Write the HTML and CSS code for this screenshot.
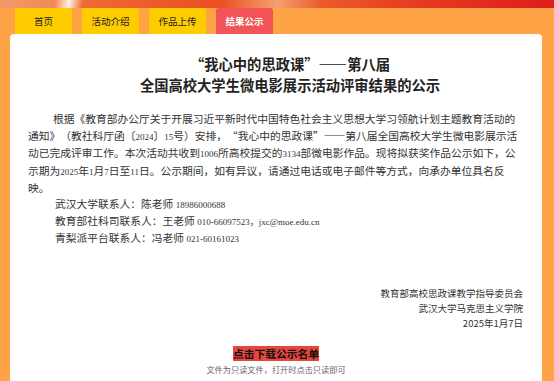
FILE: index.html
```html
<!DOCTYPE html>
<html lang="zh-CN">

<head>
    <meta charset="UTF-8">
    <meta name="viewport" content="width=device-width, initial-scale=1.0">
    <title>结果公示</title>
    <link rel="stylesheet" href="styles.css">
</head>

<body>
    <div class="banner"></div>

    <nav class="tabs">
        <a class="tab" href="#">首页</a>
        <a class="tab" href="#">活动介绍</a>
        <a class="tab" href="#">作品上传</a>
        <a class="tab active" href="#">结果公示</a>
    </nav>

    <div class="container">
        <h1 class="title">
            <span class="title-line">“我心中的思政课”——第八届</span>
            <span class="title-line">全国高校大学生微电影展示活动评审结果的公示</span>
        </h1>

        <p class="text">根据《教育部办公厅关于开展习近平新时代中国特色社会主义思想大学习领航计划主题教育活动的通知》（教社科厅函〔<span class="en">2024</span>〕<span class="en">15</span>号）安排，“我心中的思政课”——第八届全国高校大学生微电影展示活动已完成评审工作。本次活动共收到<span class="en">1006</span>所高校提交的<span class="en">3134</span>部微电影作品。现将拟获奖作品公示如下，公示期为<span class="en">2025</span>年<span class="en">1</span>月<span class="en">7</span>日至<span class="en">11</span>日。公示期间，如有异议，请通过电话或电子邮件等方式，向承办单位具名反映。</p>

        <div class="contacts">
            <p>武汉大学联系人：陈老师 <span class="en">18986000688</span></p>
            <p>教育部社科司联系人：王老师 <span class="en">010-66097523，jxc@moe.edu.cn</span></p>
            <p>青梨派平台联系人：冯老师 <span class="en">021-60161023</span></p>
        </div>

        <div class="sign">
            <p>教育部高校思政课教学指导委员会</p>
            <p>武汉大学马克思主义学院</p>
            <p>2025年1月7日</p>
        </div>

        <div class="download">
            <a class="download-link" href="#">点击下载公示名单</a>
            <p class="note">文件为只读文件，打开时点击只读即可</p>
        </div>
    </div>
</body>

</html>
```

FILE: styles.css
```css
body {
    margin: 0;
    padding: 0;
    background-color: #ffa347;
    font-family: "Noto Sans CJK SC", sans-serif;
    color: #333;
    text-spacing-trim: space-all;
}

.banner {
    height: 8px;
    background: linear-gradient(100deg, #f29a6a 0%, #f08a58 10%, #fff1e6 12.5%, #ee6a34 15%, #ea4f22 40%, #f6a070 50%, #ec5a2a 58%, #e63c20 75%, #e01c1c 100%);
}

.tabs {
    display: flex;
    gap: 10px;
    padding-left: 15px;
}

.tab {
    width: 57px;
    height: 26px;
    line-height: 26px;
    text-align: center;
    background-color: #ffcc00;
    border-radius: 3px 3px 0 0;
    color: #222;
    font-size: 9.5px;
    text-decoration: none;
}

.tab.active {
    background-color: #f25457;
    color: #fff;
    font-weight: bold;
}

.container {
    background-color: #fff;
    margin-left: 10px;
    width: 496px;
    padding: 19px 18px 10px;
    border-radius: 4px 4px 0 0;
}

.title {
    margin: 0;
    font-size: 14.3px;
    line-height: 21px;
    color: #222;
    text-align: center;
}

.title-line {
    display: block;
    padding-left: 28px;
}

.text {
    margin: 15px 0 0;
    font-size: 10.75px;
    line-height: 17.2px;
    text-indent: 25px;
}

.en {
    font-family: "Liberation Serif", "Noto Sans CJK SC", serif;
    font-size: 9px;
    line-height: 1;
}

.contacts p {
    margin: 0;
    padding-left: 27px;
    font-size: 10.75px;
    line-height: 16.8px;
}

.sign {
    margin-top: 40px;
    text-align: right;
    font-size: 9.5px;
    line-height: 15px;
    padding-right: 1px;
}

.sign p {
    margin: 0;
}

.download {
    margin-top: 8px;
    text-align: center;
}

.download-link {
    background-color: #e8453c;
    color: #111;
    font-weight: bold;
    font-size: 10.75px;
    line-height: 13px;
    text-decoration: none;
}

.note {
    margin: 0;
    color: #666;
    font-size: 8.2px;
    line-height: 12px;
}
```
